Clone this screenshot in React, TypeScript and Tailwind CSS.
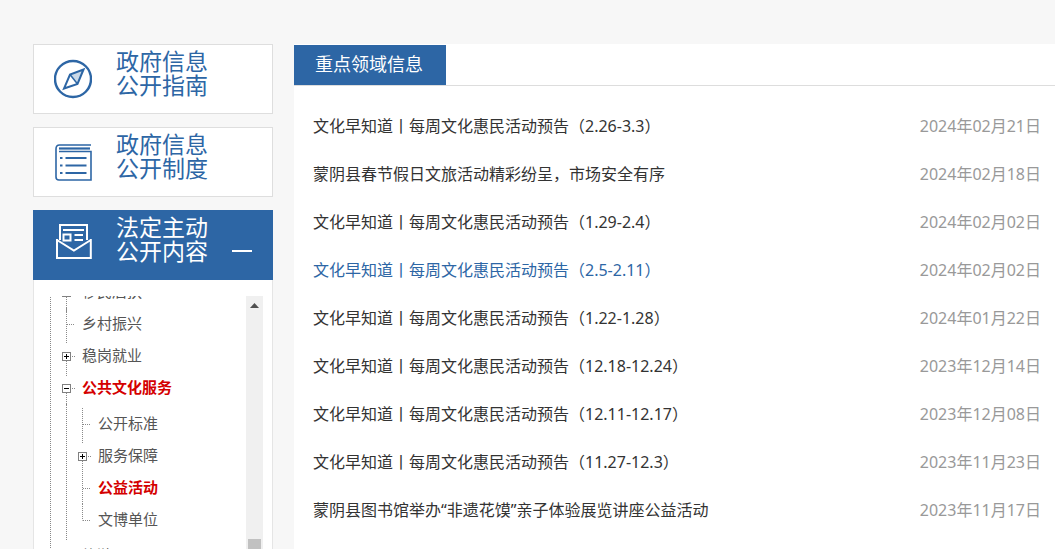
const BLUE = "#2d66a5";

const news = [
  { title: "文化早知道丨每周文化惠民活动预告（2.26-3.3）", date: "2024年02月21日" },
  { title: "蒙阴县春节假日文旅活动精彩纷呈，市场安全有序", date: "2024年02月18日" },
  { title: "文化早知道丨每周文化惠民活动预告（1.29-2.4）", date: "2024年02月02日" },
  { title: "文化早知道丨每周文化惠民活动预告（2.5-2.11）", date: "2024年02月02日", active: true },
  { title: "文化早知道丨每周文化惠民活动预告（1.22-1.28）", date: "2024年01月22日" },
  { title: "文化早知道丨每周文化惠民活动预告（12.18-12.24）", date: "2023年12月14日" },
  { title: "文化早知道丨每周文化惠民活动预告（12.11-12.17）", date: "2023年12月08日" },
  { title: "文化早知道丨每周文化惠民活动预告（11.27-12.3）", date: "2023年11月23日" },
  { title: "蒙阴县图书馆举办“非遗花馍”亲子体验展览讲座公益活动", date: "2023年11月17日" },
];

const CompassIcon = () => (
  <svg width="38" height="40" viewBox="0 0 38 40" fill="none" stroke={BLUE} strokeWidth="2">
    <circle cx="19" cy="20" r="18" strokeWidth="2.4" />
    <path d="M29.5 10.5 23.5 25 10 29.5 16 15.5Z" />
    <path d="M16 15.5 23.5 25" strokeWidth="1.5" />
    <path d="M29.5 10.5 16 15.5 23.5 25Z" fill={BLUE} fillOpacity="0.25" stroke="none" />
  </svg>
);

const BookIcon = () => (
  <svg width="38" height="40" viewBox="0 0 38 40" fill="none" stroke={BLUE}>
    <path d="M37 3H5.5Q2 3 2 7V35Q2 38 5 38H37V9.5H5" strokeWidth="1.6" />
    <path d="M5 6.5H36" strokeWidth="2.2" />
    <path d="M11.5 16H32.5M11.5 23.5H32.5M11.5 31H32.5" strokeWidth="2.2" />
    <path d="M6 16H8.5M6 23.5H8.5M6 31H8.5" strokeWidth="2.2" />
  </svg>
);

const MailIcon = () => (
  <svg width="38" height="40" viewBox="0 0 38 40" fill="none" stroke="#fff" strokeWidth="2">
    <path d="M6 18V3H33V18" />
    <path d="M3 17V36H36.8V17M3 18 19.9 28.6 36.8 18" />
    <path d="M9 8H30" />
    <rect x="9.5" y="12.5" width="7" height="6" />
    <path d="M20.5 13H29M20.5 18H29" />
  </svg>
);

type Node = "tee" | "corner" | "plus" | "minus" | "plusChild" | "tick" | "leaf";

const TreeNode = ({ kind }: { kind: Node }) => {
  const dots = { stroke: "#8a8a8a", strokeDasharray: "1 1" };
  const hasBox = kind === "plus" || kind === "minus" || kind === "plusChild";
  return (
    <svg width="16" height="32" viewBox="0 0 16 32" className="shrink-0 overflow-visible" fill="none">
      {kind === "tee" && <path d="M8.5 0V35" {...dots} />}
      {kind === "tick" && <path d="M8.5 1V32" {...dots} />}
      {kind === "corner" && <path d="M8.5 0V16.5" {...dots} />}
      {kind === "plus" && <path d="M8.5 21V36" {...dots} />}
      {kind === "minus" && <path d="M8.5 21V32" {...dots} />}
      {kind === "plusChild" && <path d="M8.5 21V32" {...dots} />}
      {hasBox ? <path d="M14 16.5H17" {...dots} /> : <path d="M9 16.5H17" {...dots} />}
      {hasBox && <rect x="4.5" y="12.5" width="8" height="8" stroke="#808080" fill="#fff" />}
      {hasBox && <path d="M6 16.5H11" stroke="#000" />}
      {(kind === "plus" || kind === "plusChild") && <path d="M8.5 14V19" stroke="#000" />}
    </svg>
  );
};

const TreeRow = ({ kind, label, active }: { kind: Node; label: string; active?: boolean }) => (
  <div className="flex h-8 items-center">
    <TreeNode kind={kind} />
    <span className={active ? "ml-2 pb-0.5 text-[15px] font-bold text-[#d40000]" : "ml-2 pb-0.5 text-[15px] text-[#555]"}>
      {label}
    </span>
  </div>
);

const Card = ({ icon, lines }: { icon: React.ReactNode; lines: string[] }) => (
  <div className="flex h-[70px] items-center border border-[#dedede] bg-white pl-5">
    {icon}
    <div className="ml-6 pb-3 text-[23px] leading-6 text-[#2d66a5]">
      {lines.map((line) => (
        <div key={line}>{line}</div>
      ))}
    </div>
  </div>
);

export default function App() {
  return (
    <div
      className="flex h-[549px] gap-[21px] overflow-hidden bg-[#f7f7f7] pt-11 pl-[33px]"
      style={{ fontFamily: '"Noto Sans", "Noto Sans CJK SC", sans-serif' }}
    >
      <aside className="flex w-60 shrink-0 flex-col">
        <Card icon={<CompassIcon />} lines={["政府信息", "公开指南"]} />
        <div className="mt-[13px]">
          <Card icon={<BookIcon />} lines={["政府信息", "公开制度"]} />
        </div>
        <div className="mt-[13px] flex h-[70px] shrink-0 items-center bg-[#2d66a5] pl-[21px] text-white">
          <div className="mb-1.5">
            <MailIcon />
          </div>
          <div className="ml-6 pb-3 text-[23px] leading-6">
            <div>法定主动</div>
            <div>公开内容</div>
          </div>
          <span className="mt-3 ml-6 h-0.5 w-5 bg-white" />
        </div>
        <div className="flex flex-1 gap-[2px] overflow-hidden border-x border-[#e5e5e5] bg-white pt-4">
          <div className="h-full flex-1 overflow-hidden">
            <div className="-mt-5 ml-4 border-l border-dotted border-[#888] pl-[7px]">
              <TreeRow kind="plus" label="移民后扶" />
              <TreeRow kind="tee" label="乡村振兴" />
              <TreeRow kind="plus" label="稳岗就业" />
              <TreeRow kind="minus" label="公共文化服务" active />
              <div className="ml-2 border-l border-dotted border-[#888] pt-1 pb-1 pl-[7px]">
                <TreeRow kind="tee" label="公开标准" />
                <TreeRow kind="plusChild" label="服务保障" />
                <TreeRow kind="tick" label="公益活动" active />
                <TreeRow kind="corner" label="文博单位" />
              </div>
              <TreeRow kind="leaf" label="旅游" />
            </div>
          </div>
          <div className="mr-[9px] flex w-[17px] shrink-0 flex-col items-center bg-[#f0f0f0]">
            <svg width="9" height="5" viewBox="0 0 9 5" className="mt-[7px] shrink-0">
              <path d="M4.5 0 9 5H0Z" fill="#505050" />
            </svg>
            <div className="mt-[231px] h-20 w-[13px] shrink-0 bg-[#c1c1c1]" />
          </div>
        </div>
      </aside>

      <main className="min-w-0 flex-1 bg-white pt-px">
        <div className="flex h-[41px] border-b border-[#ddd]">
          <div className="flex h-10 w-[152px] items-center justify-center bg-[#2d66a5] pr-0.5 pb-0.5 text-lg text-white">
            重点领域信息
          </div>
        </div>
        <ul className="pt-4 pr-3.5 pl-[19px]">
          {news.map((item) => (
            <li key={item.title} className="flex h-12 items-center justify-between text-base">
              <span className={item.active ? "text-[#2d66a5]" : "text-[#333]"}>{item.title}</span>
              <span className="text-[#999]">{item.date}</span>
            </li>
          ))}
        </ul>
      </main>
    </div>
  );
}
